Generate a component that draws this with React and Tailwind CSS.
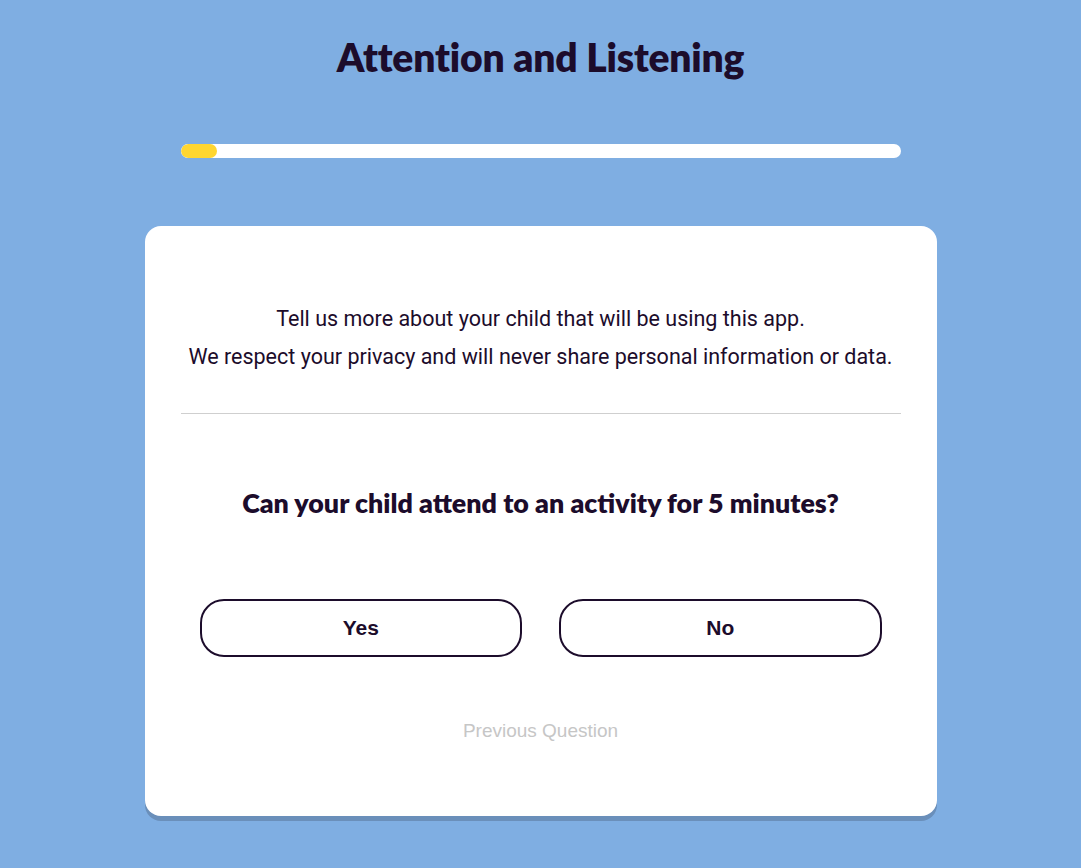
import React from "react";

function App() {
  const progress = 5;

  return (
    <div className="min-h-[868px] w-full bg-[#7faee2] flex flex-col items-center pt-[33px] font-['Roboto',sans-serif] text-[#1c0c2b]">
      <h1 className="font-['Lato',sans-serif] font-extrabold text-[39px] leading-[48px] tracking-[-0.2px]">
        Attention and Listening
      </h1>

      <div className="mt-[63px] w-[720px] h-[14px] rounded-full bg-white overflow-hidden">
        <div className="h-full rounded-full bg-[#ffd630]" style={{ width: `${progress}%` }} />
      </div>

      <div className="mt-[68px] w-[792px] h-[590px] bg-white rounded-[16px] shadow-[0_5px_0_0_#6a8fba] px-[36px] pt-[74px] flex flex-col">
        <div className="text-center text-[21.5px] leading-[38px]">
          <p>Tell us more about your child that will be using this app.</p>
          <p>We respect your privacy and will never share personal information or data.</p>
        </div>

        <div className="mt-[37px] border-t border-[#cfcfcf]" />

        <h2 className="mt-[73px] text-center font-['Lato',sans-serif] font-extrabold text-[26.8px] leading-[32px]">
          Can your child attend to an activity for 5 minutes?
        </h2>

        <div className="mt-[80px] px-[19px] grid grid-cols-2 gap-[37px]">
          <button className="h-[58px] rounded-[24px] border-2 border-[#1c0c2b] bg-white font-['Liberation_Sans',sans-serif] font-bold text-[21px]">
            Yes
          </button>
          <button className="h-[58px] rounded-[24px] border-2 border-[#1c0c2b] bg-white font-['Liberation_Sans',sans-serif] font-bold text-[21px]">
            No
          </button>
        </div>

        <button className="mt-[60px] self-center font-['Liberation_Sans',sans-serif] text-[19px] text-[#c6c6c6]">
          Previous Question
        </button>
      </div>
    </div>
  );
}

export default App;
